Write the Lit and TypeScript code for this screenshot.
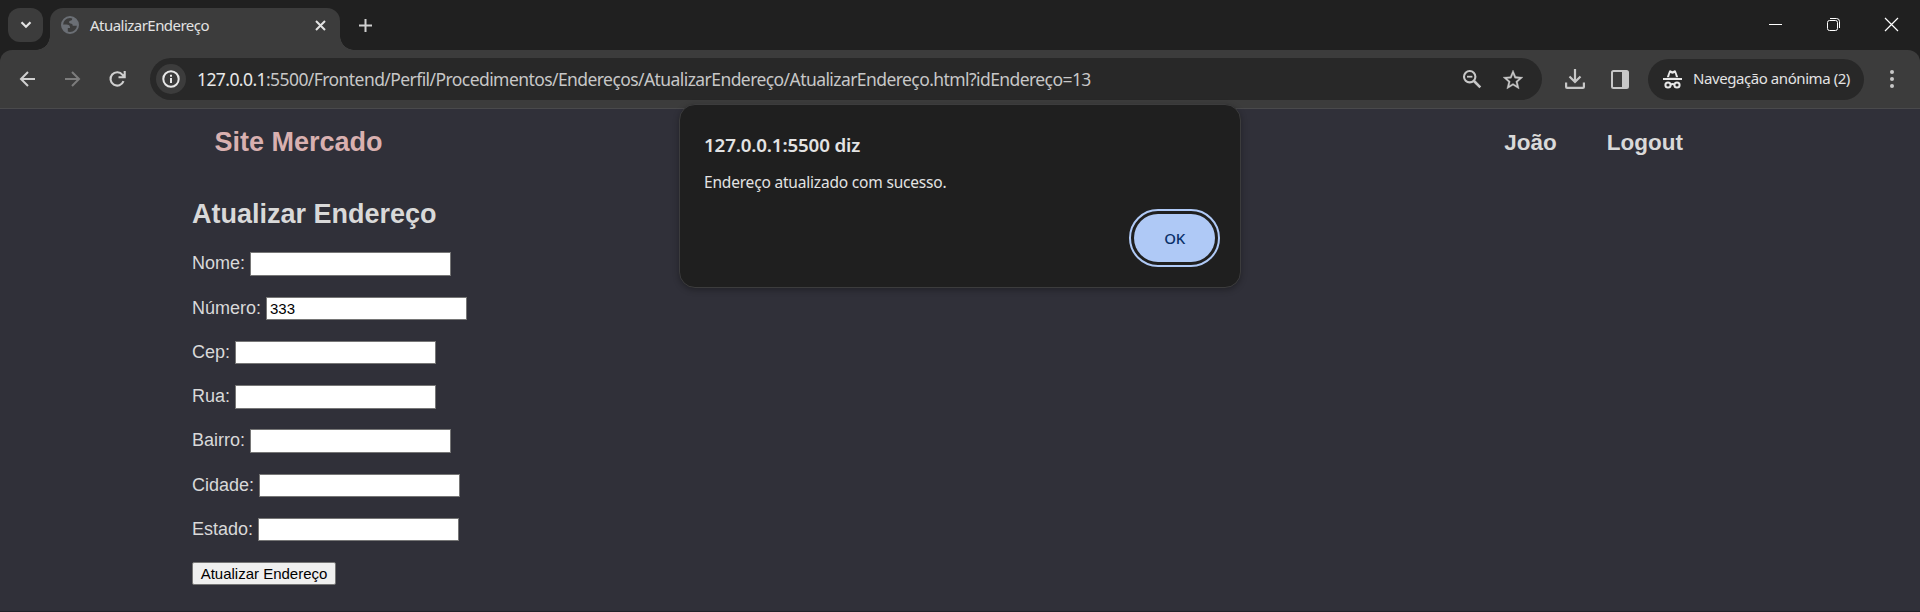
import { LitElement, html, css } from "lit";
import { customElement } from "lit/decorators.js";

@customElement("browser-bar")
class BrowserBar extends LitElement {
  static styles = css`
    :host { display: block; height: 109px; background: #202020; font-family: "Noto Sans", "Open Sans", sans-serif; color: #e3e3e3; }
    svg { display: block; flex: none; overflow: visible; }
    .strip { display: flex; height: 50px; box-sizing: border-box; padding: 8px 0 0 8px; }
    .search { width: 35px; height: 34px; border-radius: 12px; background: #3c3c3c; display: grid; place-items: center; }
    .tab { position: relative; margin-left: 7px; width: 290px; height: 42px; box-sizing: border-box; background: #3c3c3c; border-radius: 13px 13px 0 0; display: flex; align-items: center; padding: 0 14px 8px 11px; }
    .tab::before, .tab::after { content: ""; position: absolute; bottom: 0; width: 14px; height: 14px; }
    .tab::before { left: -14px; background: radial-gradient(circle at 0 0, transparent 13.5px, #3c3c3c 14px); }
    .tab::after { right: -14px; background: radial-gradient(circle at 100% 0, transparent 13.5px, #3c3c3c 14px); }
    .tabname { margin-left: 11px; flex: 1; font-size: 15px; letter-spacing: -0.53px; line-height: 20px; white-space: nowrap; }
    .plus { margin: 11px 0 0 19px; }
    .win { margin-left: auto; display: flex; gap: 45px; padding: 10px 22px 0 0; height: 13px; }
    .bar { display: flex; height: 59px; box-sizing: border-box; background: #3c3c3c; border-bottom: 1px solid #4a4a4c; border-radius: 12px 12px 0 0; padding: 8px 23px 0 19px; }
    .nav { display: flex; gap: 28px; padding-top: 12px; height: 18px; }
    .omni { margin-left: 24px; width: 1392px; height: 42px; border-radius: 21px; background: #282828; display: flex; align-items: center; box-sizing: border-box; padding: 0 19px 0 6px; }
    .info { width: 30px; height: 30px; border-radius: 50%; background: #3c3c3c; display: grid; place-items: center; }
    .url { margin-left: 11px; flex: 1; font-size: 17.5px; letter-spacing: -0.573px; line-height: 24px; white-space: nowrap; color: #c7c7c7; }
    .host { color: #e8e8e8; }
    .zoom { margin-right: 22px; }
    .side { display: flex; align-items: center; height: 42px; }
    .dl { margin-left: 23px; }
    .panel { margin-left: 26px; }
    .incog { margin-left: 19px; width: 216px; height: 41px; box-sizing: border-box; border-radius: 21px; background: #282828; display: flex; align-items: center; padding-left: 15px; font-size: 15px; letter-spacing: -0.43px; white-space: nowrap; gap: 11px; }
    .incog span { padding-bottom: 2px; }
    .dots { margin-left: 25px; }
  `;
  render() {
    return html`
      <div class="strip">
        <div class="search">
          <svg width="12" height="8" fill="none" stroke="#e3e3e3" stroke-width="2.2"><path d="M1.5 1.2 6 5.7l4.500-4.500"/></svg>
        </div>
        <div class="tab">
          <svg width="18" height="18" fill="none"><circle cx="9" cy="9" r="8" stroke="#6b6f75" stroke-width="2"/><path fill="#6b6f75" d="M1 8.500h4.200c2.800 0 3.900 1.200 3.900 3.400H6.800v4.600C3 15.500 1 12.500 1 8.500zM11.200 1.300v1.500c0 1.300-.7 2-2 2-1.600.3-1.600 2.500.2 2.700 1.500 0 2.300.9 2.300 2.200h4.900C17.200 5.500 15 2.200 11.200 1.300z"/></svg>
          <span class="tabname">AtualizarEndereço</span>
          <svg width="11" height="11" fill="none" stroke="#e3e3e3" stroke-width="2"><path d="M1 1l9 9M10 1l-9 9"/></svg>
        </div>
        <svg class="plus" width="13" height="13" fill="none" stroke="#d0d0d0" stroke-width="2"><path d="M6.500 0v13M0 6.500h13"/></svg>
        <div class="win">
          <svg width="13" height="13"><path fill="#fff" d="M0 6h13v1H0z"/></svg>
          <svg width="13" height="13" fill="none" stroke="#fff"><rect x=".5" y="2.500" width="10" height="10" rx="2"/><path d="M3 .5h6.500a3 3 0 0 1 3 3V10"/></svg>
          <svg width="13" height="13" fill="none" stroke="#fff" stroke-width="1.200"><path d="M0 0l13 13M13 0L0 13"/></svg>
        </div>
      </div>
      <div class="bar">
        <div class="nav">
          <svg width="17" height="18" fill="none" stroke="#d0d0d0" stroke-width="2"><path d="M16 9H2.500M9 2 2 9l7 7"/></svg>
          <svg width="17" height="18" fill="none" stroke="#7c7c7c" stroke-width="2"><path d="M1 9h13.500M8 2l7 7-7 7"/></svg>
          <svg width="17" height="18" fill="none" stroke="#d0d0d0" stroke-width="2.100"><path d="M14.500 11.200A6.700 6.700 0 1 1 13.500 4.800L15.600 7M15.700 1v6.200H9.500"/></svg>
        </div>
        <div class="omni">
          <div class="info"><svg width="18" height="18" fill="none" stroke="#e8e8e8" stroke-width="2"><circle cx="9" cy="9" r="7.700"/><path d="M9 8v5M9 4.800v2"/></svg></div>
          <span class="url"><span class="host">127.0.0.1</span>:5500/Frontend/Perfil/Procedimentos/Endereços/AtualizarEndereço/AtualizarEndereço.html?idEndereço=13</span>
          <svg class="zoom" width="18" height="18" fill="none" stroke="#c7c7c7" stroke-width="2.100"><circle cx="6.700" cy="6.700" r="5.700"/><path d="M11 11l6.300 6.300" stroke-width="2.600"/><path d="M4 6.700h5.400" stroke-width="1.800"/></svg>
          <svg width="20" height="19" viewBox="2 2 20 19" fill="#c7c7c7" stroke="#c7c7c7" stroke-width=".3"><path d="M22 9.240l-7.190-.62L12 2 9.190 8.630 2 9.240l5.460 4.730L5.820 21 12 17.270 18.180 21l-1.630-7.030L22 9.240zM12 15.400l-3.760 2.270 1-4.280-3.320-2.880 4.380-.38L12 6.100l1.710 4.040 4.380.38-3.320 2.880 1 4.280L12 15.400z"/></svg>
        </div>
        <div class="side">
          <svg class="dl" width="20" height="20" fill="none" stroke="#c7c7c7" stroke-width="2.200"><path d="M10 0v12.500M4.500 7.500 10 13l5.500-5.500M1.100 13.500V17.900q0 1 1 1h15.800q1 0 1-1V13.500"/></svg>
          <svg class="panel" width="18" height="19"><rect x="1" y="1" width="16" height="17" rx="1.500" fill="none" stroke="#c7c7c7" stroke-width="2"/><path fill="#c7c7c7" d="M11 1h6v17h-6z"/></svg>
          <div class="incog">
            <svg width="19" height="19" fill="#e8e8e8"><path d="M3.800 7.300 6 1.200C6.300.4 7 .2 7.700.5l1.800.7 1.800-.7c.7-.3 1.400-.1 1.700.7l2.200 6.100z"/><path d="M0 8h19v2H0z"/><path fill="#282828" d="M7.200 3l-1.200 4.200h7L11.800 3l-2.300.8z"/><g fill="none" stroke="#e8e8e8" stroke-width="2"><circle cx="5" cy="15" r="2.600"/><circle cx="14" cy="15" r="2.600"/><path d="M7.500 14.500q2-1 4 0"/></g></svg>
            <span>Navegação anónima (2)</span>
          </div>
          <svg class="dots" width="6" height="18" fill="#c7c7c7"><circle cx="3" cy="2" r="2"/><circle cx="3" cy="9" r="2"/><circle cx="3" cy="16" r="2"/></svg>
        </div>
      </div>`;
  }
}

@customElement("alert-dialog")
class AlertDialog extends LitElement {
  static styles = css`
    :host { position: absolute; left: 679px; top: 104px; width: 562px; height: 184px; box-sizing: border-box; border: 1px solid #3c3c3d; border-radius: 16px; background: #1f1f1f; box-shadow: 0 2px 6px rgba(0,0,0,.3); display: flex; flex-direction: column; padding: 26px 25px 0 24px; font-family: "Noto Sans", "Open Sans", sans-serif; color: #e3e3e3; }
    .title { font-size: 18.75px; font-weight: 600; line-height: 28px; letter-spacing: -0.16px; white-space: nowrap; }
    .msg { font-size: 15.5px; line-height: 22px; margin-top: 12px; letter-spacing: -0.19px; white-space: nowrap; }
    .ok { align-self: flex-end; margin-top: 21px; width: 81px; height: 48px; border-radius: 24px; background: #afc9f6; color: #0a3069; display: grid; place-items: center; font-size: 15px; font-weight: 500; letter-spacing: -0.3px; border: 0; padding: 0; font-family: inherit; outline: 2.500px solid #afc9f6; outline-offset: 3px; }
  `;
  render() {
    return html`<div class="title">127.0.0.1:5500 diz</div><div class="msg">Endereço atualizado com sucesso.</div><button class="ok">OK</button>`;
  }
}

@customElement("app-root")
class AppRoot extends LitElement {
  static styles = css`
    :host { display: block; position: relative; height: 612px; overflow: hidden; background: #303039; font-family: "Liberation Sans", Arial, sans-serif; color: #d9d9d9; border-bottom: 1px solid #222228; box-sizing: border-box; }
    header { display: flex; align-items: center; height: 66px; padding: 0 237px 0 214.5px; font-weight: bold; }
    .brand { font-size: 27px; color: #d9b0b0; flex: 1; }
    .link { font-size: 22.500px; margin-left: 50px; padding-top: 1px; }
    h2 { margin: 0; font-size: 27px; line-height: 31px; }
    form { padding: 24px 0 0 192px; }
    .rows { padding-top: 22.25px; display: grid; grid-auto-rows: 44.300px; }
    .row { display: flex; align-items: flex-start; font-size: 18px; gap: 5px; }
    .row label { line-height: 23px; }
    input { width: 201px; height: 23.4px; box-sizing: border-box; border: 1px solid #767676; background: #fff; color: #000; padding: 1px 3px; margin: 0; font: 15px "Liberation Sans", Arial, sans-serif; border-radius: 0; }
    .send { font: 15px "Liberation Sans", Arial, sans-serif; width: 144px; height: 23px; box-sizing: border-box; padding: 0; border: 1px solid #767676; border-radius: 2px; background: #efefef; color: #000; }
  `;
  fields = [["Nome:", ""], ["Número:", "333"], ["Cep:", ""], ["Rua:", ""], ["Bairro:", ""], ["Cidade:", ""], ["Estado:", ""]];
  render() {
    return html`
      <browser-bar></browser-bar>
      <header><span class="brand">Site Mercado</span><span class="link">João</span><span class="link">Logout</span></header>
      <form>
        <h2>Atualizar Endereço</h2>
        <div class="rows">
          ${this.fields.map(([l, v]) => html`<div class="row"><label>${l}</label><input .value=${v}></div>`)}
          <div class="row"><button type="button" class="send">Atualizar Endereço</button></div>
        </div>
      </form>
      <alert-dialog></alert-dialog>`;
  }
}
